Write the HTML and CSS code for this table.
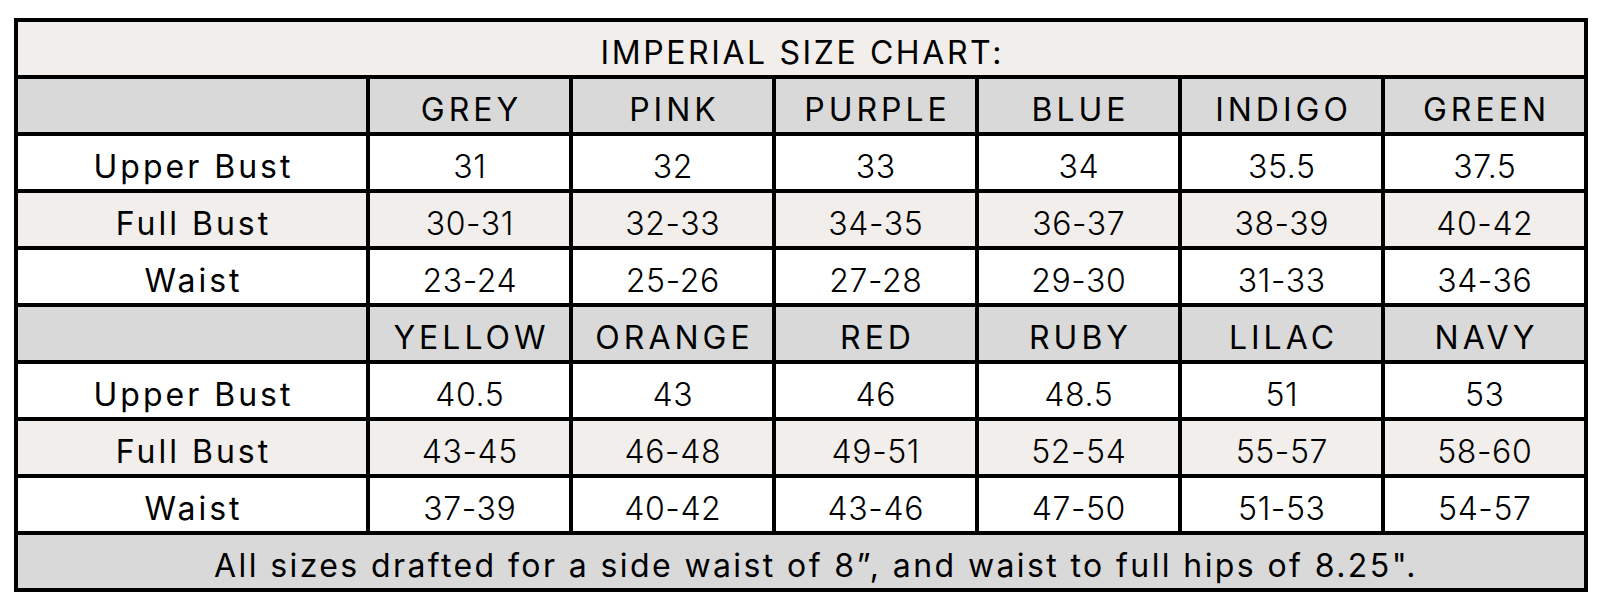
FILE: index.html
```
<!DOCTYPE html>
<html>
<head>
<meta charset="utf-8">
<link rel="stylesheet" href="styles.css">
</head>
<body>
<div class="chart">
  <div class="cell title span">IMPERIAL SIZE CHART:</div>

  <div class="cell head"></div>
  <div class="cell head">GREY</div>
  <div class="cell head">PINK</div>
  <div class="cell head">PURPLE</div>
  <div class="cell head">BLUE</div>
  <div class="cell head">INDIGO</div>
  <div class="cell head">GREEN</div>

  <div class="cell label">Upper Bust</div>
  <div class="cell num">31</div>
  <div class="cell num">32</div>
  <div class="cell num">33</div>
  <div class="cell num">34</div>
  <div class="cell num">35.5</div>
  <div class="cell num">37.5</div>

  <div class="cell label alt">Full Bust</div>
  <div class="cell num alt">30-31</div>
  <div class="cell num alt">32-33</div>
  <div class="cell num alt">34-35</div>
  <div class="cell num alt">36-37</div>
  <div class="cell num alt">38-39</div>
  <div class="cell num alt">40-42</div>

  <div class="cell label">Waist</div>
  <div class="cell num">23-24</div>
  <div class="cell num">25-26</div>
  <div class="cell num">27-28</div>
  <div class="cell num">29-30</div>
  <div class="cell num">31-33</div>
  <div class="cell num">34-36</div>

  <div class="cell head"></div>
  <div class="cell head">YELLOW</div>
  <div class="cell head">ORANGE</div>
  <div class="cell head">RED</div>
  <div class="cell head">RUBY</div>
  <div class="cell head">LILAC</div>
  <div class="cell head">NAVY</div>

  <div class="cell label">Upper Bust</div>
  <div class="cell num">40.5</div>
  <div class="cell num">43</div>
  <div class="cell num">46</div>
  <div class="cell num">48.5</div>
  <div class="cell num">51</div>
  <div class="cell num">53</div>

  <div class="cell label alt">Full Bust</div>
  <div class="cell num alt">43-45</div>
  <div class="cell num alt">46-48</div>
  <div class="cell num alt">49-51</div>
  <div class="cell num alt">52-54</div>
  <div class="cell num alt">55-57</div>
  <div class="cell num alt">58-60</div>

  <div class="cell label">Waist</div>
  <div class="cell num">37-39</div>
  <div class="cell num">40-42</div>
  <div class="cell num">43-46</div>
  <div class="cell num">47-50</div>
  <div class="cell num">51-53</div>
  <div class="cell num">54-57</div>

  <div class="cell foot span">All sizes drafted for a side waist of 8”, and waist to full hips of 8.25".</div>
</div>
</body>
</html>
```

FILE: styles.css
```
html, body {
  margin: 0;
  padding: 0;
  background: #ffffff;
}

body {
  padding: 18px 0 0 14px;
  font-family: "Inter", "Open Sans", sans-serif;
  color: #000000;
}

.chart {
  width: 1566px;
  display: grid;
  grid-template-columns: 348px repeat(6, 199px);
  grid-auto-rows: 53px;
  gap: 4px;
  padding: 4px;
  background: #000000;
}

.cell {
  background: #ffffff;
  display: flex;
  align-items: center;
  justify-content: center;
  padding-top: 8px;
  box-sizing: border-box;
  font-size: 32px;
  white-space: nowrap;
}

.span {
  grid-column: 1 / -1;
}

.title {
  background: #f2eeeb;
  font-weight: 400;
  letter-spacing: 2.6px;
  padding-left: 2.6px;
}

.head {
  background: #d9d9d9;
  font-weight: 400;
  letter-spacing: 4px;
  padding-left: 4px;
}

.label {
  font-weight: 400;
  letter-spacing: 3px;
  padding-left: 3px;
}

.num {
  font-weight: 300;
  letter-spacing: 0.6px;
  padding-left: 0.6px;
}

.alt {
  background: #f2eeeb;
}

.foot {
  background: #d9d9d9;
  font-weight: 400;
  letter-spacing: 2.4px;
  padding-left: 30px;
}
```
